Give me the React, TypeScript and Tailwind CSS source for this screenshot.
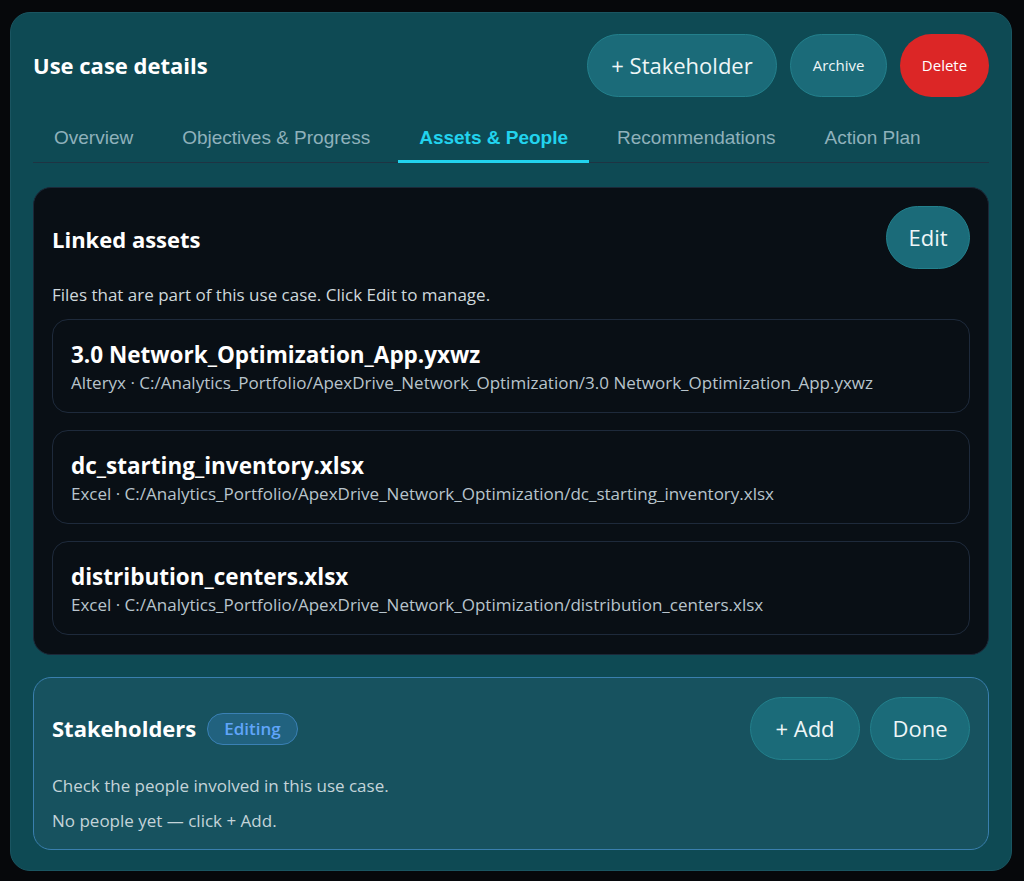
export default function App() {
  const assets = [
    {
      name: "3.0 Network_Optimization_App.yxwz",
      path: "Alteryx · C:/Analytics_Portfolio/ApexDrive_Network_Optimization/3.0 Network_Optimization_App.yxwz",
    },
    {
      name: "dc_starting_inventory.xlsx",
      path: "Excel · C:/Analytics_Portfolio/ApexDrive_Network_Optimization/dc_starting_inventory.xlsx",
    },
    {
      name: "distribution_centers.xlsx",
      path: "Excel · C:/Analytics_Portfolio/ApexDrive_Network_Optimization/distribution_centers.xlsx",
    },
  ];
  const tabs = ["Overview", "Objectives & Progress", "Assets & People", "Recommendations", "Action Plan"];
  const pill =
    "rounded-full bg-[#1b6b79] border border-[#23808c] text-[#eef6f7] flex items-center justify-center";

  return (
    <div className="w-[1024px] h-[881px] bg-[#06080b] pl-[10px] pr-[12px] pt-[12px] font-['Open_Sans',sans-serif]">
      <div className="h-[859px] rounded-[20px] bg-[#0e4a54] border border-[#1a5561] px-[22px] pt-[21px]">
        {/* header */}
        <div className="flex items-center justify-between">
          <h1 className="text-[22px] font-bold text-white">Use case details</h1>
          <div className="flex gap-[13px]">
            <button className={`${pill} h-[63px] w-[190px] text-[22px]`}>+ Stakeholder</button>
            <button className={`${pill} h-[63px] w-[97px] text-[15px]`}>Archive</button>
            <button className="h-[63px] w-[89px] rounded-full bg-[#dc2626] text-white text-[15px]">Delete</button>
          </div>
        </div>

        {/* tabs */}
        <div className="mt-[16px] flex gap-[7px] border-b border-[#1e3443] font-['Liberation_Sans',sans-serif] text-[19px] leading-[22px]">
          {tabs.map((t) => (
            <div
              key={t}
              className={
                t === "Assets & People"
                  ? "px-[21px] pt-[14px] pb-[11px] font-bold text-[#22d3ee] border-b-[3px] border-[#22d3ee] -mb-px"
                  : "px-[21px] pt-[14px] pb-[13px] text-[#8fb1bb]"
              }
            >
              {t}
            </div>
          ))}
        </div>

        {/* linked assets */}
        <div className="mt-[24px] rounded-[18px] bg-[#090f15] border border-[#1c2838] px-[18px] pt-[18px] pb-[19px]">
          <div className="flex items-center justify-between">
            <h2 className="text-[22px] font-bold text-white pt-[3px]">Linked assets</h2>
            <button className={`${pill} h-[63px] w-[84px] text-[22px]`}>Edit</button>
          </div>
          <p className="mt-[15px] text-[17px] leading-[22px] text-[#cfd8dc]">
            Files that are part of this use case. Click Edit to manage.
          </p>
          <div className="mt-[13px] flex flex-col gap-[17px]">
            {assets.map((a) => (
              <div key={a.name} className="h-[94px] rounded-[16px] border border-[#1e2a3b] px-[18px] pt-[21px]">
                <div className="text-[22.5px] font-bold text-white leading-[28px]">{a.name}</div>
                <div className="mt-[3px] text-[17px] leading-[22px] text-[#b8c4cc]">{a.path}</div>
              </div>
            ))}
          </div>
        </div>

        {/* stakeholders */}
        <div className="mt-[22px] rounded-[18px] bg-[#17525f] border border-[#3a7fae] px-[18px] pt-[19px] pb-[17px]">
          <div className="flex items-center justify-between">
            <div className="flex items-center gap-[11px]">
              <h2 className="text-[22px] font-bold text-white">Stakeholders</h2>
              <span className="h-[32px] px-[16px] rounded-full bg-[#21627f] border border-[#3a80b5] text-[#60a5fa] text-[17px] font-semibold flex items-center">
                Editing
              </span>
            </div>
            <div className="flex gap-[10px]">
              <button className={`${pill} h-[63px] w-[110px] text-[22px]`}>+ Add</button>
              <button className={`${pill} h-[63px] w-[100px] text-[22px]`}>Done</button>
            </div>
          </div>
          <p className="mt-[15px] text-[17px] leading-[22px] text-[#c4d4d9]">Check the people involved in this use case.</p>
          <p className="mt-[13px] text-[17px] leading-[22px] text-[#c4d4d9]">No people yet — click + Add.</p>
        </div>
      </div>
    </div>
  );
}
